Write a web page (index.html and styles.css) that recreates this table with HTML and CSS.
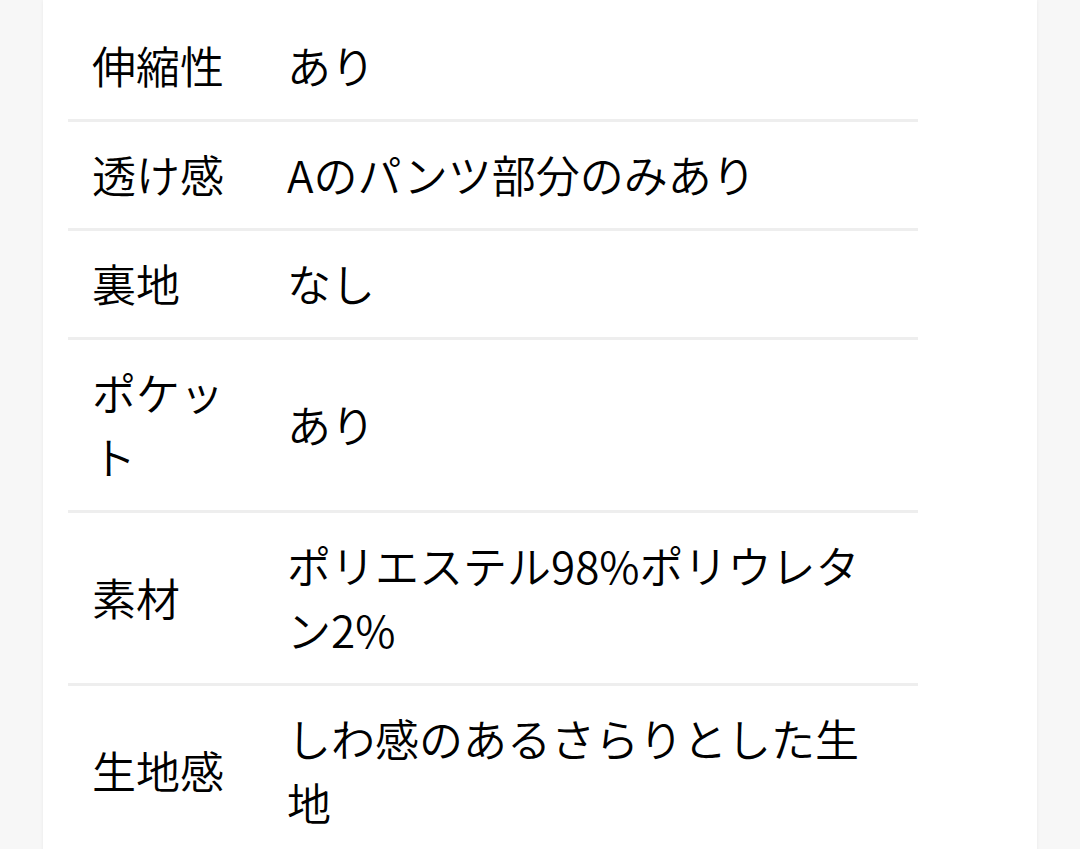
FILE: index.html
```html
<!DOCTYPE html>
<html lang="ja">
<head>
<meta charset="utf-8">
<title>商品詳細</title>
<link rel="stylesheet" href="styles.css">
</head>
<body>
<main class="card">
  <table class="spec">
    <tbody>
      <tr><th>伸縮性</th><td>あり</td></tr>
      <tr><th>透け感</th><td>Aのパンツ部分のみあり</td></tr>
      <tr><th>裏地</th><td>なし</td></tr>
      <tr><th>ポケット</th><td>あり</td></tr>
      <tr><th>素材</th><td>ポリエステル98%ポリウレタン2%</td></tr>
      <tr><th>生地感</th><td>しわ感のあるさらりとした生地</td></tr>
    </tbody>
  </table>
</main>
</body>
</html>
```

FILE: styles.css
```css
html, body {
  margin: 0;
  padding: 0;
  background: #f7f7f7;
}
body {
  font-family: "Noto Sans CJK JP", "Noto Sans", sans-serif;
  color: #000;
  overflow: hidden;
  height: 849px;
}
.card {
  margin-left: 43px;
  width: 994px;
  background: #fff;
  box-shadow: 0 0 4px rgba(0, 0, 0, 0.06);
  padding: 13px 0 40px 25px;
  box-sizing: border-box;
  min-height: 900px;
}
.spec {
  width: 850px;
  border-collapse: collapse;
  table-layout: fixed;
  font-size: 44px;
  font-weight: 350;
  line-height: 64px;
}
.spec th,
.spec td {
  font-weight: 350;
  text-align: left;
  vertical-align: middle;
  padding: 20px 24px 22px;
  border-bottom: 3px solid #eeeeee;
}
.spec th {
  width: 147px;
}
.spec tr:last-child th,
.spec tr:last-child td {
  border-bottom: none;
}
```
